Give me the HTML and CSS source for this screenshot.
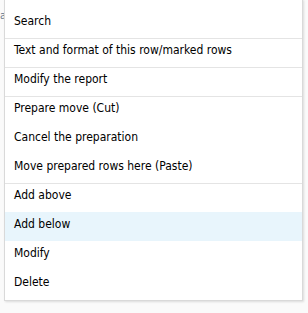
FILE: index.html
```html
<!DOCTYPE html>
<html>
<head>
<meta charset="utf-8">
<link rel="stylesheet" href="styles.css">
</head>
<body>
<div class="page">
  <span class="behind">a</span>
</div>
<ul class="menu">
  <li class="item">Search</li>
  <li class="item sep">Text and format of this row/marked rows</li>
  <li class="item sep">Modify the report</li>
  <li class="item sep">Prepare move (Cut)</li>
  <li class="item">Cancel the preparation</li>
  <li class="item">Move prepared rows here (Paste)</li>
  <li class="item sep">Add above</li>
  <li class="item hover">Add below</li>
  <li class="item">Modify</li>
  <li class="item">Delete</li>
</ul>
</body>
</html>
```
FILE: styles.css
```css
html, body {
  margin: 0;
  padding: 0;
}
body {
  width: 308px;
  height: 313px;
  overflow: hidden;
  background: #fafafa;
  position: relative;
  font-family: "DejaVu Sans Condensed", "DejaVu Sans", sans-serif;
  font-size: 12px;
  color: #000;
}
.page {
  padding-top: 9px;
}
.behind {
  display: block;
  margin-left: 0;
  color: #6a7a90;
  font-size: 11px;
}
.menu {
  position: absolute;
  left: 4px;
  top: -1px;
  width: 297px;
  margin: 0;
  padding: 9px 0 1px;
  list-style: none;
  background: #fff;
  border: 1px solid #d9d9d9;
  box-shadow: 1px 1px 2px rgba(0, 0, 0, 0.12);
}
.item {
  box-sizing: border-box;
  height: 29px;
  padding: 4px 9px 0;
  line-height: 14px;
  border-top: 1px solid transparent;
  white-space: nowrap;
  color: #000;
}
.sep {
  border-top-color: #e4e4e4;
}
.hover {
  background: #e8f5fc;
}
```
